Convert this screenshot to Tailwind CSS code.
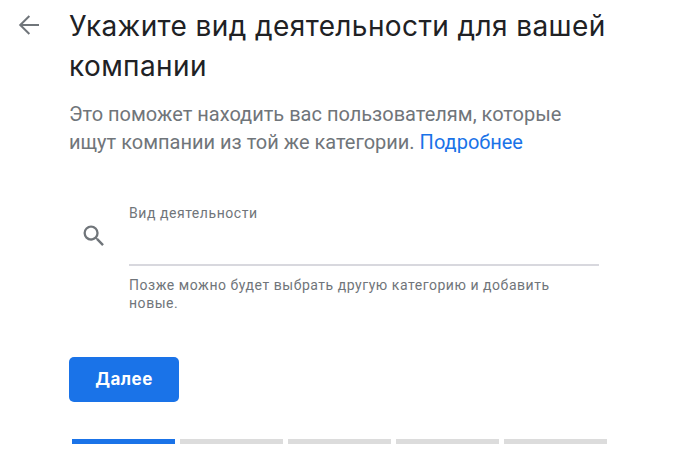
<!DOCTYPE html>
<html><head><meta charset="utf-8"><script src="https://cdn.jsdelivr.net/npm/@tailwindcss/browser@4"></script></head>
<body class="bg-white font-['Roboto',sans-serif] overflow-hidden">
<div class="w-[689px] h-[461px] flex overflow-hidden">
  <div class="w-[69px] shrink-0 pt-[10px] pl-[14px]">
    <svg class="w-[30px] h-[30px]" viewBox="0 0 24 24" fill="none" stroke="#70757a" stroke-width="1.6"><path d="M20 12H5.5M12.3 4.8 5 12l7.3 7.2"/></svg>
  </div>
  <div class="w-[540px] flex flex-col">
    <h1 class="font-['Inter',sans-serif] text-[28px] tracking-[0.4px] leading-[40px] pt-[6px] text-[#202124] font-normal">Укажите вид деятельности для вашей компании</h1>
    <p class="mt-[14px] text-[20px] leading-[28px] text-[#70757a]">Это поможет находить вас пользователям, которые ищут компании из той же категории. <span class="text-[#1a73e8]">Подробнее</span></p>
    <div class="flex mt-[48px]">
      <svg class="w-7 h-7 mt-[18px] ml-[11px] shrink-0" viewBox="0 0 24 24" fill="#70757a"><path d="M15.5 14h-.79l-.28-.27A6.47 6.47 0 0 0 16 9.5 6.5 6.5 0 1 0 9.5 16c1.61 0 3.09-.59 4.23-1.57l.27.28v.79l5 4.99L20.49 19l-4.99-5zm-6 0C7.01 14 5 11.99 5 9.5S7.01 5 9.5 5 14 7.01 14 9.5 11.99 14 9.5 14z"/></svg>
      <div class="ml-[21px] w-[470px]">
        <div class="text-[14px] leading-[18px] tracking-[0.55px] text-[#70757a]">Вид деятельности</div>
        <div class="h-[44px] border-b-2 border-[#d8d8de]"></div>
        <div class="mt-[10px] w-[430px] text-[14px] leading-[18px] text-[#70757a] tracking-[0.54px]">Позже можно будет выбрать другую категорию и добавить новые.</div>
      </div>
    </div>
    <button class="mt-[45px] w-[110px] h-[45px] rounded-[5px] bg-[#1a73e8] text-white font-['Inter',sans-serif] text-[17px] tracking-[0.5px] font-bold">Далее</button>
    <div class="mt-[37px] ml-[3px] flex gap-[5px]">
      <div class="w-[103px] h-[5px] bg-[#1a73e8]"></div>
      <div class="w-[103px] h-[5px] bg-[#dcdcdc]"></div>
      <div class="w-[103px] h-[5px] bg-[#dcdcdc]"></div>
      <div class="w-[103px] h-[5px] bg-[#dcdcdc]"></div>
      <div class="w-[103px] h-[5px] bg-[#dcdcdc]"></div>
    </div>
  </div>
</div>
</body></html>
